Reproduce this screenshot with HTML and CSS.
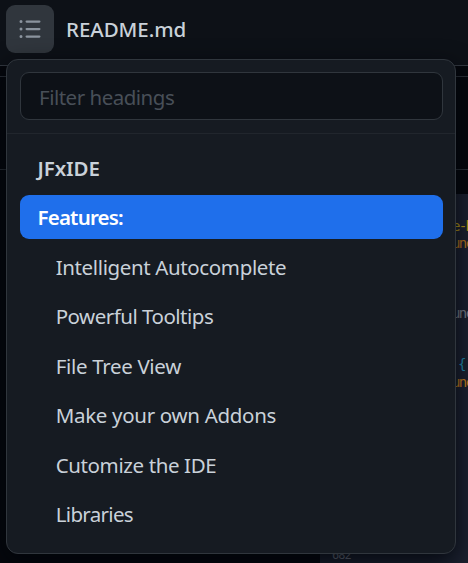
FILE: index.html
```html
<!DOCTYPE html>
<html lang="en">
<head>
<meta charset="utf-8">
<title>README.md</title>
<link rel="stylesheet" href="styles.css">
</head>
<body>
<header class="header">
  <button class="toggle" aria-label="Table of contents">
    <svg width="24" height="24" viewBox="0 0 16 16" fill="#8b949e"><path d="M2 4a1 1 0 1 0 0-2 1 1 0 0 0 0 2Zm3.75-1.75a.75.75 0 0 0 0 1.5h8.5a.75.75 0 0 0 0-1.5h-8.5Zm0 5a.75.75 0 0 0 0 1.5h8.5a.75.75 0 0 0 0-1.5h-8.5Zm0 5a.75.75 0 0 0 0 1.5h8.5a.75.75 0 0 0 0-1.5h-8.5ZM3 8a1 1 0 1 1-2 0 1 1 0 0 1 2 0Zm-1 6a1 1 0 1 0 0-2 1 1 0 0 0 0 2Z"/></svg>
  </button>
  <h1 class="title"><span class="t-readme">README.md</span></h1>
</header>
<main class="page">
  <div class="document"><div class="rule"></div></div>
  <div class="shot">
    <span class="code c1">e-b</span>
    <span class="code c2">unc</span>
    <span class="code c3">unc</span>
    <span class="code c4">{</span>
    <span class="code c5">unc</span>
    <span class="code line-no">682</span>
  </div>
</main>
<nav class="menu">
  <div class="search"><div class="field"><span class="t-filter">Filter headings</span></div></div>
  <div class="list">
    <a class="row top"><span class="t-jfx">JFxIDE</span></a>
    <a class="row top active"><span class="t-features">Features:</span></a>
    <a class="row"><span class="t-intelligent">Intelligent Autocomplete</span></a>
    <a class="row"><span class="t-powerful">Powerful Tooltips</span></a>
    <a class="row"><span class="t-file">File Tree View</span></a>
    <a class="row"><span class="t-make">Make your own Addons</span></a>
    <a class="row"><span class="t-custom">Cutomize the IDE</span></a>
    <a class="row"><span class="t-lib">Libraries</span></a>
  </div>
</nav>
</body>
</html>
```
FILE: styles.css
```css
* { box-sizing: border-box; }
body {
  margin: 0;
  position: relative;
  width: 468px;
  height: 563px;
  overflow: hidden;
  background: #05080d;
  color: #c9d1d9;
  font: 20.5px/30px "Noto Sans", "Open Sans", sans-serif;
}
.header {
  display: flex;
  align-items: flex-start;
  gap: 12px;
  height: 66px;
  padding: 5px 6px;
  background: #0d1117;
  border-bottom: 1px solid #343a42;
}
.toggle {
  display: flex;
  align-items: center;
  justify-content: center;
  width: 48px;
  height: 48px;
  padding: 0;
  border: 0;
  border-radius: 9px;
  background: #30363d;
}
.title { margin: 9px 0 0; font-size: 20.5px; font-weight: 500; line-height: 30px; }
.page { height: 497px; padding-top: 10px; }
.document { height: 118px; padding-top: 92px; border-top: 1px solid #2a3037; background: #05080d; }
.rule { height: 1px; background: #2a3037; }
.shot {
  position: relative;
  height: 369px;
  margin-left: 320px;
  background: #1c2230;
}
.code {
  position: absolute;
  left: 132px;
  font: 14px/16px "DejaVu Sans Mono", monospace;
  letter-spacing: -1.7px;
  white-space: nowrap;
}
.c1 { top: 24px; color: #b89c16; }
.c2 { top: 41px; color: #b8761f; }
.c3 { top: 111px; color: #7a808a; }
.c4 { top: 162px; left: 138px; color: #2390b4; }
.c5 { top: 180px; color: #c8801f; }
.line-no { top: 353px; left: 12px; color: #737a88; font-size: 12px; letter-spacing: -1px; }
.menu {
  position: absolute;
  top: 59px;
  left: 6px;
  width: 450px;
  height: 495px;
  border: 1px solid #30363d;
  border-radius: 12px;
  background: #161b22;
  box-shadow: 0 8px 24px rgba(1, 4, 9, .85);
}
.search { height: 74px; padding: 12px 12px 0 13px; border-bottom: 1px solid #21262d; }
.field {
  height: 48px;
  padding: 9px 18px;
  border: 1px solid #30363d;
  border-radius: 9px;
  background: #0d1117;
  color: #484f58;
  line-height: 30px;
}
.list { display: flex; flex-direction: column; gap: 5.5px; padding: 11.5px 12px 0 13px; }
.row {
  height: 44px;
  padding-left: 35.7px;
  border-radius: 9px;
  line-height: 45px;
  white-space: nowrap;
}
.top { padding-left: 17.5px; font-weight: 600; }
.active { background: #1f6feb; color: #fff; }
.t-readme { letter-spacing: -.05px; }
.t-filter { letter-spacing: -.5px; }
.t-jfx { letter-spacing: -.1px; }
.t-features { letter-spacing: -.8px; }
.t-intelligent { letter-spacing: -.37px; }
.t-powerful { letter-spacing: -.5px; }
.t-file { letter-spacing: -.33px; }
.t-make { letter-spacing: -.31px; }
.t-custom { letter-spacing: -.38px; }
.t-lib { letter-spacing: -.67px; }
```
